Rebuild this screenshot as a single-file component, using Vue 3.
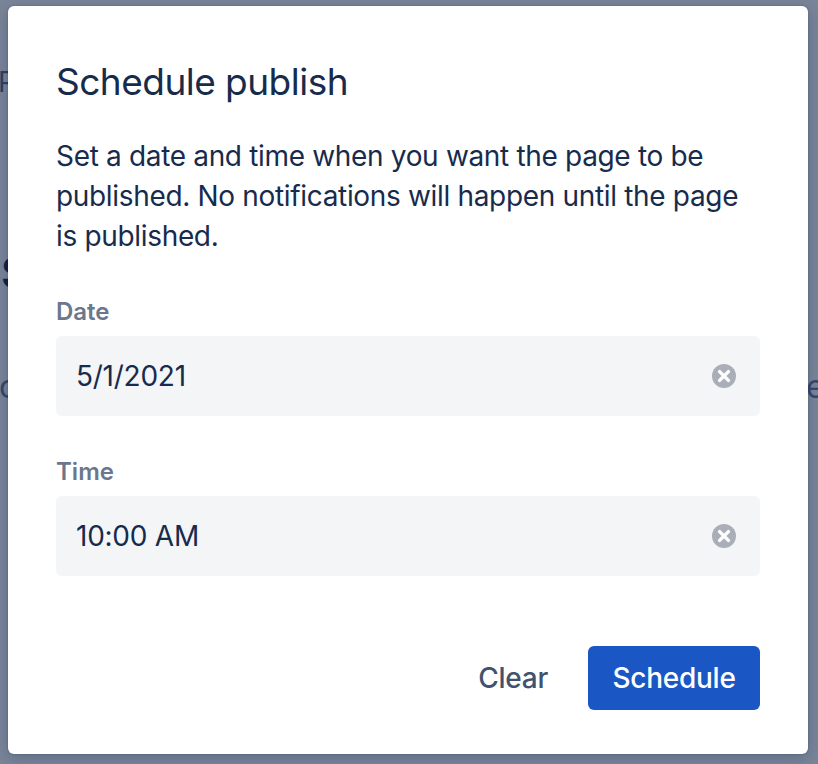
<template>
  <div class="page">
    <!-- page behind the overlay, mostly hidden by the dialog -->
    <div class="behind">
      <span class="behind-text behind-p">P</span>
      <span class="behind-text behind-s">S</span>
      <span class="behind-text behind-c">c</span>
      <span class="behind-text behind-e">e</span>
    </div>

    <div class="overlay">
      <div class="dialog">
        <h2 class="dialog-title">Schedule publish</h2>
        <p class="dialog-text">
          Set a date and time when you want the page to be published. No notifications will happen until the page is published.
        </p>

        <div v-for="field in fields" :key="field.label" class="field">
          <label class="field-label">{{ field.label }}</label>
          <div class="field-input">
            <span class="field-value">{{ field.value }}</span>
            <svg class="clear-icon" viewBox="0 0 24 24" xmlns="http://www.w3.org/2000/svg">
              <circle cx="12" cy="12" r="12" fill="#a9aeb9" />
              <path d="M7.6 7.6l8.8 8.8M16.4 7.6l-8.8 8.8" stroke="#fff" stroke-width="3.4" stroke-linecap="round" fill="none" />
            </svg>
          </div>
        </div>

        <div class="dialog-actions">
          <button class="btn-clear">Clear</button>
          <button class="btn-schedule">Schedule</button>
        </div>
      </div>
    </div>
  </div>
</template>

<script setup>
const fields = [
  { label: 'Date', value: '5/1/2021' },
  { label: 'Time', value: '10:00 AM' }
]
</script>

<style>
html, body {
  margin: 0;
  height: 100%;
  overflow: hidden;
}
</style>

<style scoped>
.page {
  position: relative;
  width: 818px;
  height: 764px;
  overflow: hidden;
  font-family: Inter, "Liberation Sans", sans-serif;
  background: #fff;
}

.behind-text {
  position: absolute;
  color: #6f7b9e;
  line-height: 1;
}

.behind-p {
  left: -2px;
  top: 68px;
  font-size: 28px;
  color: #5a6a8c;
}

.behind-s {
  left: 1px;
  top: 252px;
  font-size: 42px;
  font-weight: 600;
  color: #172b4d;
}

.behind-c {
  left: -1px;
  top: 371px;
  font-size: 32px;
}

.behind-e {
  left: 806px;
  top: 371px;
  font-size: 32px;
}

.overlay {
  position: absolute;
  inset: 0;
  background: rgba(9, 30, 66, 0.54);
  padding: 6px 10px 10px 8px;
  box-sizing: border-box;
}

.dialog {
  position: relative;
  width: 800px;
  height: 748px;
  box-sizing: border-box;
  padding: 56px 48px 44px;
  background: #fff;
  border-radius: 6px;
  box-shadow: 0 0 2px rgba(9, 30, 66, 0.31), 0 4px 16px rgba(9, 30, 66, 0.25);
  display: flex;
  flex-direction: column;
}

.dialog-title {
  margin: 0;
  font-size: 37px;
  line-height: 40px;
  font-weight: 430;
  letter-spacing: -0.52px;
  color: #172b4d;
}

.dialog-text {
  margin: 34px 0 0;
  font-size: 28px;
  line-height: 40px;
  letter-spacing: -0.33px;
  color: #172b4d;
}

.field {
  margin-top: 40px;
}

.field-label {
  display: block;
  font-size: 24px;
  line-height: 32px;
  font-weight: 600;
  color: #6b778c;
  margin-bottom: 8px;
}

.field-input {
  height: 80px;
  box-sizing: border-box;
  padding: 0 24px 0 20px;
  background: #f4f5f7;
  border-radius: 6px;
  display: flex;
  align-items: center;
  justify-content: space-between;
}

.field-value {
  font-size: 28px;
  letter-spacing: -0.25px;
  color: #172b4d;
}

.clear-icon {
  width: 24px;
  height: 24px;
}

.dialog-actions {
  margin-top: auto;
  display: flex;
  justify-content: flex-end;
  align-items: center;
  gap: 16px;
}

.btn-clear,
.btn-schedule {
  height: 64px;
  border: none;
  border-radius: 6px;
  font-family: inherit;
  font-size: 28px;
  font-weight: 500;
  letter-spacing: -0.25px;
  padding: 0 24px;
  cursor: pointer;
}

.btn-clear {
  background: transparent;
  color: #42526e;
}

.btn-schedule {
  width: 172px;
  padding: 0;
  background: #1b57c4;
  color: #fff;
}
</style>
